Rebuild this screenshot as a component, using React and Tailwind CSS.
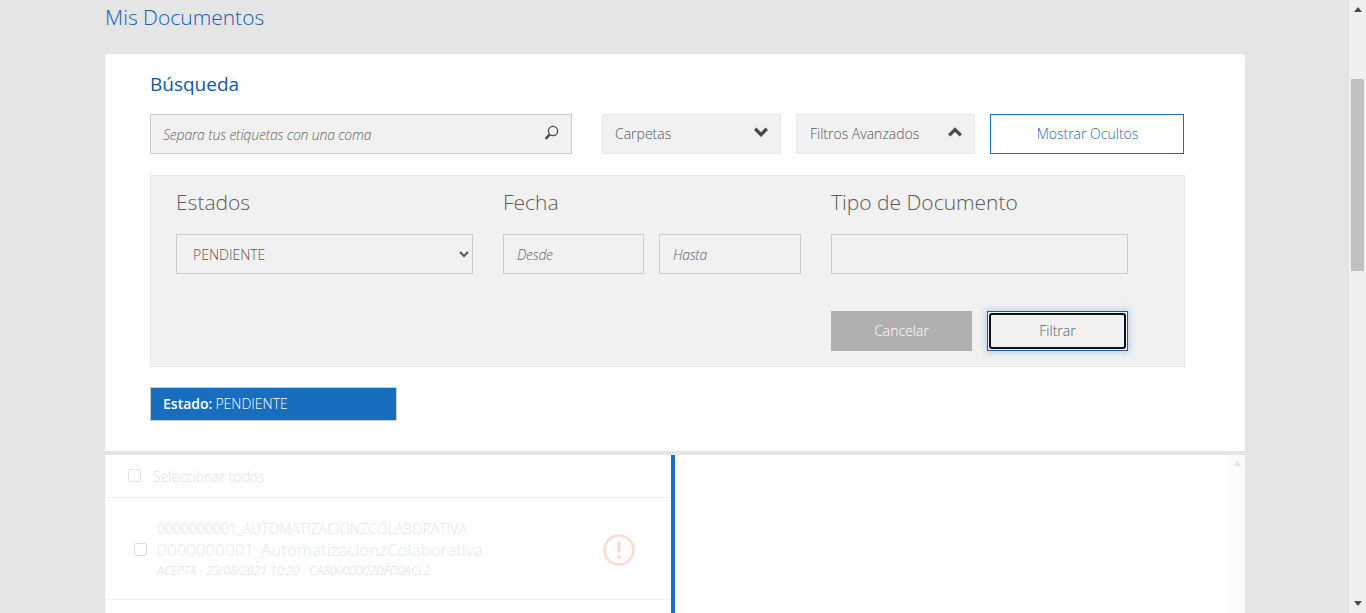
import React from "react";

function Chevron({ up }) {
  return (
    <svg width="14" height="10" viewBox="0 0 14 10" className="mb-[3px] block" fill="none" stroke="#4a4a4a" strokeWidth="3.4">
      <path d={up ? "M1.2 8.4L7 2.6L12.8 8.4" : "M1.2 1.8L7 7.6L12.8 1.8"} />
    </svg>
  );
}

function Dropdown({ label, up, pad }) {
  return (
    <button className={`flex h-10 w-[179px] items-center justify-between border border-[#e8e8e8] bg-[#f1f1f1] ${pad} pr-[12px] pb-[2px] text-[14px] font-light text-[#555]`}>
      <span>{label}</span>
      <Chevron up={up} />
    </button>
  );
}

function Arrow({ down, color = "#4a4a4a" }) {
  return (
    <svg width="8" height="5" viewBox="0 0 8 5" className="block" fill={color}>
      <path d={down ? "M0 0H8L4 5Z" : "M4 0L8 5H0Z"} />
    </svg>
  );
}

const heading = "text-[21px] leading-[30px] font-light text-[#5a5a5a]";

export default function App() {
  return (
    <div className="flex h-[613px] overflow-hidden bg-[#e5e5e5] font-['Open_Sans',sans-serif]">
      <main className="min-w-0 flex-1 pl-[105px] pr-[104px]">
        <h1 className="h-[54px] pt-[2px] text-[21px] leading-[30px] font-light text-[#0f62b0]">Mis Documentos</h1>

        <section className="h-[397px] rounded-t-[4px] bg-white pl-[45px] pr-[60px]">
          <h2 className="pt-[16px] text-[19px] leading-[28px] text-[#0d5aa7]">Búsqueda</h2>

          <div className="mt-[16px] flex">
            <div className="flex h-10 w-[422px] items-center border border-[#ccc] bg-[#f1f1f1] pl-[12px] pr-[12px]">
              <input
                placeholder="Separa tus etiquetas con una coma"
                className="min-w-0 flex-1 bg-transparent text-[14px] tracking-[-0.18px] font-light italic outline-none placeholder:text-[#666]"
              />
              <svg width="15" height="16" viewBox="0 0 15 16" fill="none" stroke="#4a4a4a" className="mb-[2px]">
                <circle cx="9" cy="6" r="4.6" strokeWidth="1.3" />
                <path d="M5.6 9.6L1.6 13.8" strokeWidth="2.4" />
              </svg>
            </div>
            <div className="ml-[30px] flex gap-[15px]">
              <Dropdown label="Carpetas" pad="pl-[12px]" />
              <Dropdown label="Filtros Avanzados" up pad="pl-[13px]" />
              <button className="h-10 w-[194px] border border-[#1a6dbd] bg-white pl-[1px] pb-[2px] text-[14px] font-light text-[#1a6dbd]">
                Mostrar Ocultos
              </button>
            </div>
          </div>

          <div className="mt-[21px] h-[192px] w-[1035px] border border-[#e8e8e8] bg-[#f1f1f1] pl-[25px]">
            <div className="flex pt-[11px]">
              <div className="w-[297px]">
                <h3 className={heading}>Estados</h3>
                <select className="mt-[17px] h-10 w-full border border-[#ccc] bg-transparent pl-[12px] pr-[4px] text-[14px] font-light text-[#555] outline-none">
                  <option>PENDIENTE</option>
                </select>
              </div>
              <div className="ml-[30px] w-[298px]">
                <h3 className={heading}>Fecha</h3>
                <div className="mt-[17px] flex gap-[15px]">
                  <input placeholder="Desde" className="h-10 w-[141px] border border-[#ccc] bg-transparent pl-[13px] text-[14px] tracking-[-0.3px] font-light italic outline-none placeholder:text-[#666]" />
                  <input placeholder="Hasta" className="h-10 w-[142px] border border-[#ccc] bg-transparent pl-[13px] text-[14px] tracking-[-0.3px] font-light italic outline-none placeholder:text-[#666]" />
                </div>
              </div>
              <div className="ml-[30px] w-[297px]">
                <h3 className={heading}>Tipo de Documento</h3>
                <input className="mt-[17px] h-10 w-full border border-[#ccc] bg-transparent outline-none" />
              </div>
            </div>
            <div className="mt-[37px] ml-[655px] flex w-[297px] justify-between">
              <button className="h-10 w-[141px] bg-[#b0b0b0] pb-[2px] text-[14px] font-light text-white">Cancelar</button>
              <button className="h-10 w-[141px] border border-[#1a5fa8] bg-[#f1f1f1] p-[1px] shadow-[0_0_6px_2px_rgba(26,109,189,0.22)]">
                <span className="flex h-full w-full items-center justify-center rounded-[3px] border-[2.5px] border-[#111] pb-[2px] text-[14px] font-light text-[#4f5f75]">
                  Filtrar
                </span>
              </button>
            </div>
          </div>

          <div className="mt-[20px] flex h-[34px] w-[247px] items-center border border-[#ccc] bg-[#186dbf] pb-[2px] pl-[12px] text-[14px] text-white">
            <b className="font-semibold">Estado:</b>
            <span className="ml-[3px] font-light">PENDIENTE</span>
          </div>
        </section>

        <section className="mt-[4px] flex h-[158px] bg-white">
          <div className="w-[566px]">
            <div className="flex h-[43px] items-center border-b border-[#f2f2f2] pl-[23px] pb-[2px]">
              <span className="h-[13px] w-[13px] rounded-[2px] border border-[#e2e2e2]" />
              <span className="ml-[12px] mt-[2px] text-[14px] font-light text-[#e0e0e0]">Seleccionar todos</span>
            </div>
            <div className="flex h-[102px] items-center border-b border-[#f2f2f2] pl-[29px]">
              <span className="mt-[2px] h-[13px] w-[13px] rounded-[2px] border border-[#dcdcdc]" />
              <div className="ml-[10px] w-[447px]">
                <div className="text-[14px] leading-[19px] font-light text-[#e4e4e4]">0000000001_AUTOMATIZACIONZCOLABORATIVA</div>
                <div className="text-[17px] leading-[24px] font-light text-[#dfe8f2]">0000000001_AutomatizacionzColaborativa</div>
                <div className="text-[12px] leading-[17px] font-light italic text-[#dcdcdc]">ACEPTA - 23/08/2021 10:20 - CA80000002DFD0ACL2</div>
              </div>
              <svg width="32" height="32" viewBox="0 0 32 32" className="mt-[2px] ml-[-1px]" fill="none">
                <circle cx="16" cy="16" r="14.5" stroke="#fbdccf" strokeWidth="2.5" />
                <path d="M16 8V18.5" stroke="#fbdccf" strokeWidth="3.5" />
                <circle cx="16" cy="23" r="2" fill="#fbdccf" />
              </svg>
            </div>
          </div>
          <div className="w-1 bg-[#186dbf]" />
          <div className="flex-1" />
          <div className="flex w-[17px] justify-center bg-[#fbfbfb] pt-[6px]">
            <Arrow color="#e6e6e6" />
          </div>
        </section>
      </main>

      <aside className="relative flex w-[17px] flex-col items-center justify-between bg-[#f0f0f0] py-[7px]">
        <Arrow />
        <div className="absolute top-[79px] h-[192px] w-[13px] bg-[#c0c0c0]" />
        <Arrow down />
      </aside>
    </div>
  );
}
